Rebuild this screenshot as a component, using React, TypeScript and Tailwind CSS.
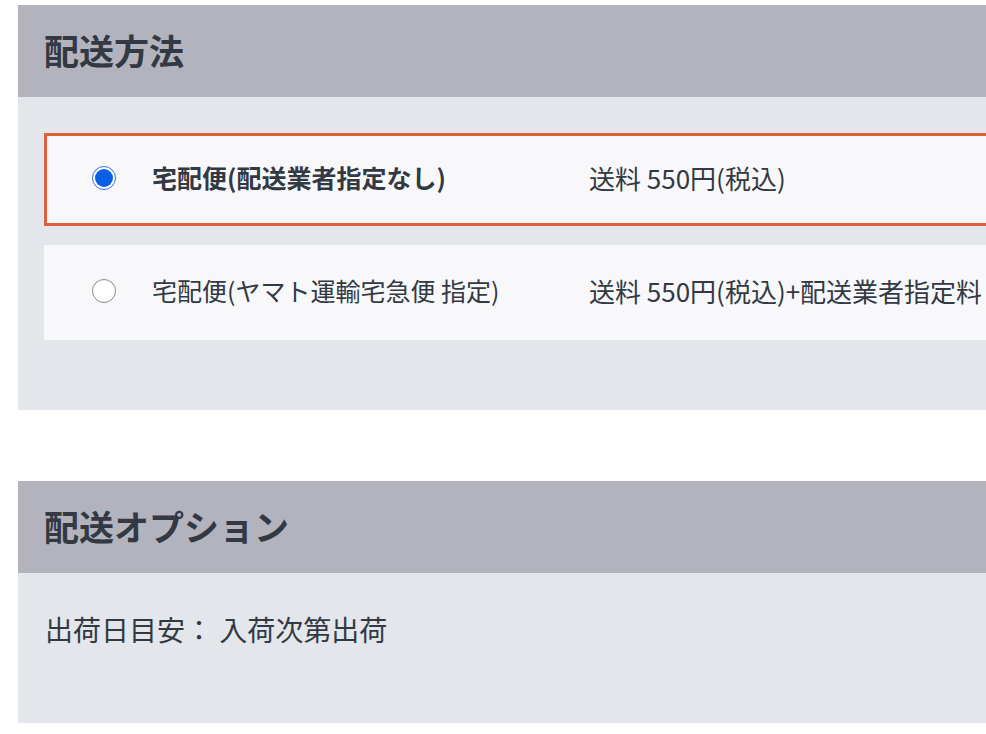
export default function App() {
    const font = { fontFamily: '"Noto Sans CJK JP", "Noto Sans", sans-serif' }

    const options = [
        { id: "1", label: "宅配便(配送業者指定なし)", price: "送料 550円(税込)", selected: true },
        { id: "2", label: "宅配便(ヤマト運輸宅急便 指定)", price: "送料 550円(税込)+配送業者指定料", selected: false },
    ]

    return (
        <div className="w-[986px] h-[734px] overflow-hidden bg-white pt-[5px] pl-[18px] text-[#323943]" style={font}>
            <div className="w-[1040px]">
                <div className="h-[92px] bg-[#b3b3bd] flex items-center pl-[26px]">
                    <h2 className="text-[35px] font-bold leading-none -mt-[4px]">配送方法</h2>
                </div>
                <div className="bg-[#e3e6ea] pt-[36px] pb-[70px] pl-[26px] flex flex-col gap-[19px]">
                    {options.map((o) => (
                        <div
                            key={o.id}
                            className={
                                o.selected
                                    ? "h-[93px] bg-[#f8f8fa] border-[3px] border-[#e0603c] flex items-center pl-[45px] pb-[4px]"
                                    : "h-[95px] bg-[#f8f8fa] flex items-center pl-[48px] pb-[4px]"
                            }
                        >
                            {o.selected ? (
                                <span className="w-[24px] h-[24px] rounded-full border border-[#2f72e0] bg-white flex items-center justify-center flex-none">
                                    <span className="w-[18px] h-[18px] rounded-full bg-[#0a5fe3]"></span>
                                </span>
                            ) : (
                                <span className="w-[24px] h-[24px] rounded-full border border-[#8a8a8a] bg-white flex-none"></span>
                            )}
                            <div className={"w-[437px] ml-[36px] text-[25px] whitespace-nowrap " + (o.selected ? "font-bold" : "")}>{o.label}</div>
                            <div className="text-[26px] whitespace-nowrap">{o.price}</div>
                        </div>
                    ))}
                </div>

                <div className="h-[71px]"></div>

                <div className="h-[92px] bg-[#b3b3bd] flex items-center pl-[26px]">
                    <h2 className="text-[35px] font-bold leading-none -mt-[4px]">配送オプション</h2>
                </div>
                <div className="h-[150px] bg-[#e3e6ea] pl-[27px] pt-[36px]">
                    <p className="text-[28px] leading-[40px]">出荷日目安： 入荷次第出荷</p>
                </div>
            </div>
        </div>
    )
}
